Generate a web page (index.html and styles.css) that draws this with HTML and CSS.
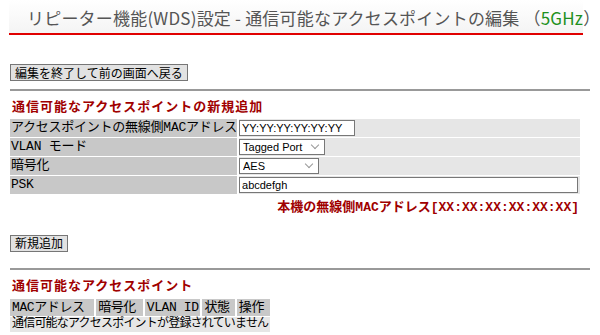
FILE: index.html
```html
<!DOCTYPE html>
<html lang="ja">
<head>
    <meta charset="UTF-8">
    <title>リピーター機能(WDS)設定</title>
    <link rel="stylesheet" href="styles.css">
</head>
<body>
    <div class="page-title">
        <h1>リピーター機能(WDS)設定 - 通信可能なアクセスポイントの編集 （<span class="band">5GHz</span>）</h1>
    </div>

    <form class="wds-form">
        <div class="back-row">
            <input type="button" class="btn" value="編集を終了して前の画面へ戻る">
        </div>

        <hr>

        <h2>通信可能なアクセスポイントの新規追加</h2>
        <table class="setting-table">
            <tr>
                <th>アクセスポイントの無線側MACアドレス</th>
                <td><input type="text" class="mac-input" value="YY:YY:YY:YY:YY:YY"></td>
            </tr>
            <tr>
                <th>VLAN モード</th>
                <td>
                    <span class="select-wrap">
                        <select class="vlan-select">
                            <option>Tagged Port</option>
                        </select>
                    </span>
                </td>
            </tr>
            <tr>
                <th>暗号化</th>
                <td>
                    <span class="select-wrap">
                        <select class="enc-select">
                            <option>AES</option>
                        </select>
                    </span>
                </td>
            </tr>
            <tr>
                <th>PSK</th>
                <td><input type="text" class="psk-input" value="abcdefgh"></td>
            </tr>
        </table>
        <p class="own-mac">本機の無線側MACアドレス[XX:XX:XX:XX:XX:XX]</p>

        <div class="add-row">
            <input type="button" class="btn" value="新規追加">
        </div>

        <hr class="list-rule">

        <h2>通信可能なアクセスポイント</h2>
        <table class="list-table">
            <tr>
                <th class="col-mac">MACアドレス</th>
                <th class="col-enc">暗号化</th>
                <th class="col-vlan">VLAN ID</th>
                <th class="col-state">状態</th>
                <th class="col-op">操作</th>
            </tr>
            <tr>
                <td colspan="5">通信可能なアクセスポイントが登録されていません</td>
            </tr>
        </table>
    </form>
</body>
</html>
```

FILE: styles.css
```css
/* Common styles */
body {
    font-family: "Liberation Mono", "Noto Sans CJK JP", monospace;
    font-size: 13px;
    color: #000;
    margin: 0;
    padding: 0 10px;
    background-color: #fff;
}

.page-title {
    height: 33px;
    border-bottom: 2px solid #e00000;
    background: linear-gradient(to bottom, #ffffff, #f4f4f4);
    margin: 0 7px 0 -1px;
}

h1 {
    margin: 0;
    padding: 6px 0 0 18px;
    font-family: "Noto Sans CJK JP", sans-serif;
    font-size: 17px;
    font-weight: normal;
    color: #555;
    line-height: 24px;
    white-space: nowrap;
    letter-spacing: 0.2px;
}

.band {
    color: #209020;
}

.back-row {
    padding-top: 29px;
}

.btn {
    font-family: "Noto Sans CJK JP", sans-serif;
    font-size: 12px;
    line-height: 14px;
    height: 17px;
    padding: 0 4px;
    margin: 0;
    background-color: #e2e2e2;
    border: 1px solid #767676;
    border-radius: 0;
    color: #000;
}

hr {
    border: none;
    border-top: 2px solid #999;
    margin: 7px 0 0 0;
}

hr.list-rule {
    margin-top: 16px;
}

h2 {
    font-family: "Noto Sans CJK JP", sans-serif;
    font-size: 13px;
    font-weight: bold;
    color: #a00000;
    margin: 7px 0 5px 2px;
    line-height: 16px;
    letter-spacing: 1px;
}

/* New entry table */
.setting-table {
    border-collapse: separate;
    border-spacing: 0 1px;
    width: 570px;
    margin-top: -1px;
}

.setting-table th {
    background-color: #c8c8c8;
    font-weight: normal;
    text-align: left;
    white-space: nowrap;
    padding: 0 0 0 1px;
    height: 18px;
    line-height: 16px;
    border-right: 2px solid #fff;
    width: 225px;
    letter-spacing: -0.25px;
}

.setting-table td {
    background-color: #e6e6e6;
    padding: 0;
    height: 18px;
}

.setting-table input,
.setting-table select {
    font-family: "Liberation Sans", sans-serif;
    font-size: 11px;
    height: 16px;
    margin: 0;
    box-sizing: border-box;
    border: 1px solid #777;
    border-radius: 0;
    background-color: #fff;
    color: #000;
    padding: 0 2px;
    display: block;
}

.setting-table select {
    appearance: none;
    -webkit-appearance: none;
    padding-left: 3px;
}

.select-wrap {
    position: relative;
    display: inline-block;
    vertical-align: top;
}

/* thin chevron of the select box */
.select-wrap::after {
    content: "";
    position: absolute;
    right: 7px;
    top: 3px;
    width: 5px;
    height: 5px;
    border-right: 1px solid #999;
    border-bottom: 1px solid #999;
    transform: rotate(45deg);
    pointer-events: none;
}

.mac-input {
    width: 116px;
}

.vlan-select {
    width: 86px;
}

.enc-select {
    width: 80px;
}

.psk-input {
    width: 339px;
}

.own-mac {
    margin: 5px 0 0 0;
    width: 569px;
    text-align: right;
    font-weight: bold;
    color: #a00000;
    line-height: 16px;
}

.add-row {
    padding-top: 19px;
}

/* Registered list */
.list-table {
    border-collapse: separate;
    border-spacing: 2px 1px;
    margin-left: -2px;
    margin-top: 0;
}

.list-table th {
    background-color: #c8c8c8;
    font-weight: normal;
    text-align: left;
    padding: 0 1px 0 2px;
    height: 17px;
    line-height: 16px;
    white-space: nowrap;
    letter-spacing: -0.4px;
}

.col-mac {
    width: 80px;
}

.col-enc {
    width: 43px;
}

.col-vlan {
    width: 51px;
}

.col-state {
    width: 29px;
}

.col-op {
    width: 30px;
}

.list-table td {
    background-color: #e6e6e6;
    padding: 0 2px;
    height: 15px;
    line-height: 15px;
    white-space: nowrap;
    font-size: 12px;
    letter-spacing: -0.8px;
}
```
